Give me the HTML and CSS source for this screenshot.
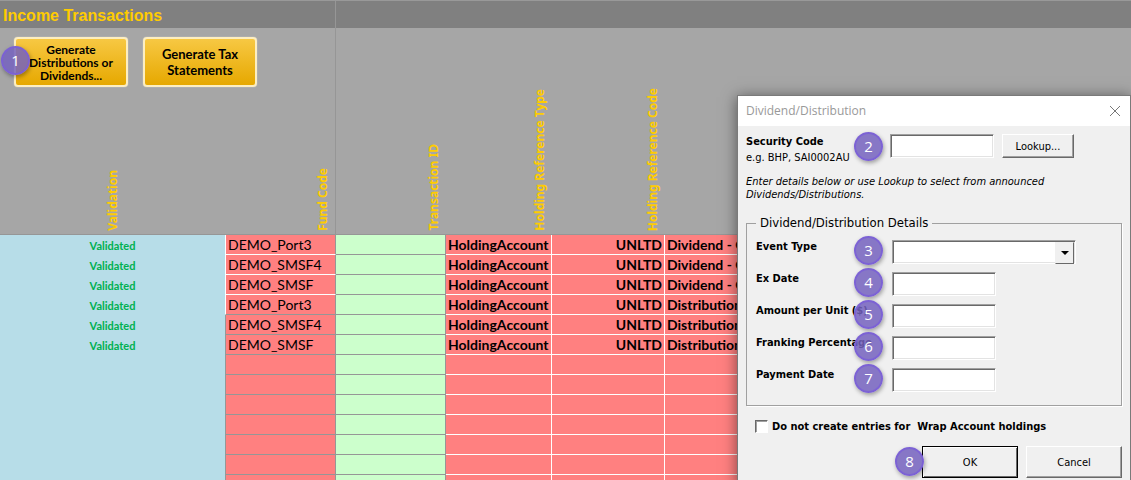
FILE: index.html
```html
<!DOCTYPE html>
<html lang="en">
<head>
    <meta charset="UTF-8">
    <meta name="viewport" content="width=device-width, initial-scale=1.0">
    <title>Income Transactions</title>
    <link rel="stylesheet" href="styles.css">
</head>
<body>
    <main class="sheet">
        <h1 class="sheet-title">Income Transactions</h1>

        <div class="sheet-body">
            <div class="toolbar">
                <button type="button" class="gold-btn"><span class="badge badge-toolbar">1</span>Generate Distributions or Dividends...</button>
                <button type="button" class="gold-btn roomy">Generate Tax Statements</button>
            </div>

            <table class="grid">
                <colgroup>
                    <col class="col-validation">
                    <col class="col-fund">
                    <col class="col-id">
                    <col class="col-type">
                    <col class="col-code">
                    <col>
                </colgroup>
                <thead>
                    <tr>
                        <th class="centered"><span>Validation</span></th>
                        <th class="divider"><span>Fund Code</span></th>
                        <th><span>Transaction ID</span></th>
                        <th><span>Holding Reference Type</span></th>
                        <th><span>Holding Reference Code</span></th>
                        <th></th>
                    </tr>
                </thead>
                <tbody>
                    <tr class="open"><td>Validated</td><td>DEMO_Port3</td><td></td><td>HoldingAccount</td><td>UNLTD</td><td>Dividend - Cash</td></tr>
                    <tr class="open"><td>Validated</td><td>DEMO_SMSF4</td><td></td><td>HoldingAccount</td><td>UNLTD</td><td>Dividend - Cash</td></tr>
                    <tr class="open"><td>Validated</td><td>DEMO_SMSF</td><td></td><td>HoldingAccount</td><td>UNLTD</td><td>Dividend - Cash</td></tr>
                    <tr class="open last"><td>Validated</td><td>DEMO_Port3</td><td></td><td>HoldingAccount</td><td>UNLTD</td><td>Distribution</td></tr>
                    <tr><td>Validated</td><td>DEMO_SMSF4</td><td></td><td>HoldingAccount</td><td>UNLTD</td><td>Distribution</td></tr>
                    <tr><td>Validated</td><td>DEMO_SMSF</td><td></td><td>HoldingAccount</td><td>UNLTD</td><td>Distribution</td></tr>
                    <tr><td></td><td></td><td></td><td></td><td></td><td></td></tr>
                    <tr><td></td><td></td><td></td><td></td><td></td><td></td></tr>
                    <tr><td></td><td></td><td></td><td></td><td></td><td></td></tr>
                    <tr><td></td><td></td><td></td><td></td><td></td><td></td></tr>
                    <tr><td></td><td></td><td></td><td></td><td></td><td></td></tr>
                    <tr><td></td><td></td><td></td><td></td><td></td><td></td></tr>
                    <tr><td></td><td></td><td></td><td></td><td></td><td></td></tr>
                </tbody>
            </table>
        </div>
    </main>

    <form class="dialog" role="dialog" aria-labelledby="dialogTitle">
        <header class="dialog-head">
            <h2 id="dialogTitle">Dividend/Distribution</h2>
            <button type="button" class="close" aria-label="Close">
                <svg width="12" height="12" viewBox="0 0 12 12"><path d="M1 1L11 11M11 1L1 11" stroke="#777" fill="none"/></svg>
            </button>
        </header>

        <div class="dialog-body">
            <div class="security">
                <label for="security"><b>Security Code</b><br>e.g. BHP, SAI0002AU</label>
                <span class="badge">2</span>
                <input type="text" id="security" class="box">
                <button type="button" class="btn lookup">Lookup...</button>
            </div>

            <p class="hint">Enter details below or use Lookup to select from announced Dividends/Distributions.</p>

            <fieldset>
                <legend>Dividend/Distribution Details</legend>
                <div class="field">
                    <label for="eventType">Event Type</label>
                    <span class="badge">3</span>
                    <span class="combo box"><select id="eventType"><option></option></select></span>
                </div>
                <div class="field">
                    <label for="exDate">Ex Date</label>
                    <span class="badge">4</span>
                    <input type="text" id="exDate" class="box">
                </div>
                <div class="field">
                    <label for="amount">Amount per Unit ($)</label>
                    <span class="badge">5</span>
                    <input type="text" id="amount" class="box">
                </div>
                <div class="field">
                    <label for="franking">Franking Percentage</label>
                    <span class="badge">6</span>
                    <input type="text" id="franking" class="box">
                </div>
                <div class="field">
                    <label for="payDate">Payment Date</label>
                    <span class="badge">7</span>
                    <input type="text" id="payDate" class="box">
                </div>
            </fieldset>

            <label class="check"><input type="checkbox">Do not create entries for&nbsp; Wrap Account holdings</label>

            <div class="actions">
                <button type="submit" class="btn ok"><span class="badge badge-ok">8</span>OK</button>
                <button type="button" class="btn">Cancel</button>
            </div>
        </div>
    </form>
</body>
</html>
```

FILE: styles.css
```css
* {
    box-sizing: border-box;
}
body {
    margin: 0;
    height: 100vh;
    overflow: hidden;
    position: relative;
    background-color: #a6a6a6;
    color: #000;
    font-family: Lato, sans-serif;
}

/* worksheet */
.sheet-title {
    margin: 0;
    height: 28px;
    padding: 4px 3px 0;
    border-top: 1px solid #999;
    background: linear-gradient(#969696, #969696) 335px 0 / 1px 100% no-repeat #808080;
    color: #ffcc00;
    font: bold 16px/22px "Liberation Sans", Arial, sans-serif;
}
.sheet-body {
    position: relative;
}
.toolbar {
    position: absolute;
    top: 9px;
    left: 14px;
    display: flex;
    gap: 15px;
}
.gold-btn {
    position: relative;
    width: 114px;
    height: 50px;
    padding: 0 8px;
    border: 2px solid #fdeec0;
    border-radius: 4px;
    background: linear-gradient(#f7c843, #e6a800);
    box-shadow: 0 0 1px #fff;
    color: #000;
    font: bold 12px/13px Lato, sans-serif;
}
.gold-btn.roomy {
    font-size: 13px;
    line-height: 16px;
}
.grid {
    width: 100%;
    border-collapse: separate;
    border-spacing: 0;
    table-layout: fixed;
}
.col-validation { width: 225px; }
.col-fund { width: 111px; }
.col-id { width: 110px; }
.col-type { width: 106px; }
.col-code { width: 113px; }
.grid th {
    height: 207px;
    padding: 0 4px 3px;
    border-bottom: 1px solid #969696;
    vertical-align: bottom;
    text-align: right;
    color: #ffcc00;
    font: bold 12px/16px "Noto Sans", sans-serif;
}
.grid th.centered {
    text-align: center;
}
.grid th.divider {
    border-right: 1px solid #969696;
}
.grid th span {
    display: inline-block;
    vertical-align: bottom;
    writing-mode: vertical-rl;
    transform: rotate(180deg);
    white-space: nowrap;
}
.grid td {
    height: 20px;
    padding: 1px 2px 0;
    border-right: 1px solid #fff;
    border-bottom: 1px solid #fff;
    background-color: #ff8080;
    font-size: 14px;
    line-height: 18px;
    font-weight: bold;
    white-space: nowrap;
    overflow: hidden;
}
.grid td:nth-child(1) {
    border: 0;
    background-color: #b7dde8;
    color: #00b050;
    font-size: 11px;
    text-align: center;
}
.grid td:nth-child(2) {
    border: 1px solid #969696;
    border-top: 0;
    font-weight: normal;
}
.grid .open td:nth-child(2) {
    border-left-color: #fff;
    border-bottom-color: #fff;
}
.grid .last td:nth-child(2) {
    border-bottom-color: #969696;
}
.grid td:nth-child(3) {
    border-color: #969696;
    background-color: #ccffcc;
}
.grid td:nth-child(5) {
    text-align: right;
}

/* numbered markers */
.badge {
    position: absolute;
    left: 108px;
    top: -6px;
    width: 29px;
    height: 29px;
    border: 2px solid rgba(123, 97, 214, 0.9);
    border-radius: 50%;
    background-color: rgba(116, 97, 190, 0.85);
    box-shadow: 1px 2px 4px rgba(0, 0, 0, 0.35);
    color: #fff;
    font: 15px/25px "Open Sans", sans-serif;
    text-align: center;
}
.badge-toolbar {
    left: -15px;
    top: 7px;
}
.badge-ok {
    left: -28px;
    top: 0;
}

/* dialog */
.dialog {
    position: absolute;
    top: 95px;
    right: 0;
    width: 394px;
    border: 1px solid #7a7a7a;
    background-color: #f0f0f0;
    box-shadow: 0 2px 14px rgba(0, 0, 0, 0.5);
    font: 11px/13px "DejaVu Sans Condensed", Tahoma, sans-serif;
}
.dialog-head {
    display: flex;
    justify-content: space-between;
    align-items: center;
    height: 30px;
    padding: 0 9px 0 8px;
    background-color: #fff;
}
.dialog-head h2 {
    margin: 0;
    color: #999;
    font: 12px/16px "Open Sans", sans-serif;
}
.close {
    display: flex;
    padding: 0;
    border: 0;
    background: none;
}
.dialog-body {
    padding: 8px;
}
.security {
    position: relative;
    display: flex;
    height: 32px;
}
.security label {
    width: 144px;
    line-height: 16px;
}
.security .badge {
    top: -2px;
}
.box {
    width: 104px;
    height: 24px;
    border: 1px solid #fff;
    border-top-color: #a0a0a0;
    border-left-color: #a0a0a0;
    border-radius: 0;
    background-color: #fff;
    box-shadow: inset 1px 1px #696969, inset -1px -1px #e3e3e3;
    font: inherit;
}
.btn {
    position: relative;
    width: 96px;
    height: 32px;
    padding: 0;
    border: 1px solid #fff;
    border-right-color: #696969;
    border-bottom-color: #696969;
    background-color: #f0f0f0;
    box-shadow: inset -1px -1px #a0a0a0;
    color: #000;
    font: inherit;
}
.lookup {
    width: 72px;
    height: 24px;
    margin-left: 8px;
}
.ok {
    border-color: #000;
    box-shadow: inset 1px 1px #fff, inset -1px -1px #696969;
}
.hint {
    margin: 9px 40px 14px 0;
    font-style: italic;
}
fieldset {
    margin: 0;
    padding: 0 9px 5px;
    border: 1px solid #a0a0a0;
    box-shadow: 1px 1px #fff;
}
legend {
    padding: 0 4px;
    font-size: 13px;
    line-height: 16px;
}
.field {
    position: relative;
    display: flex;
    height: 32px;
}
legend + .field {
    margin-top: 9px;
}
.field label {
    width: 136px;
    font-weight: bold;
}
.field .badge {
    left: 98px;
    top: -4px;
}
.combo {
    position: relative;
    width: 184px;
    padding: 1px;
}
.combo select {
    width: 100%;
    height: 100%;
    border: 0;
    background: none;
    appearance: none;
    font: inherit;
}
.combo::before {
    content: "";
    position: absolute;
    top: 1px;
    right: 1px;
    width: 17px;
    height: 20px;
    border: 1px solid #f0f0f0;
    border-right-color: #696969;
    border-bottom-color: #696969;
    background-color: #f0f0f0;
    pointer-events: none;
}
.combo::after {
    content: "";
    position: absolute;
    top: 10px;
    right: 6px;
    border: 4px solid transparent;
    border-top-color: #000;
    border-bottom: 0;
    pointer-events: none;
}
.check {
    display: flex;
    align-items: center;
    gap: 4px;
    margin: 14px 0 13px 9px;
    font-weight: bold;
}
.check input {
    width: 13px;
    height: 13px;
    margin: 0;
    appearance: none;
    border: 1px solid #fff;
    border-top-color: #696969;
    border-left-color: #696969;
    box-shadow: inset 1px 1px #a0a0a0;
    background-color: #fff;
}
.check input:checked {
    background-color: #696969;
}
.actions {
    display: flex;
    justify-content: flex-end;
    gap: 8px;
}
```
